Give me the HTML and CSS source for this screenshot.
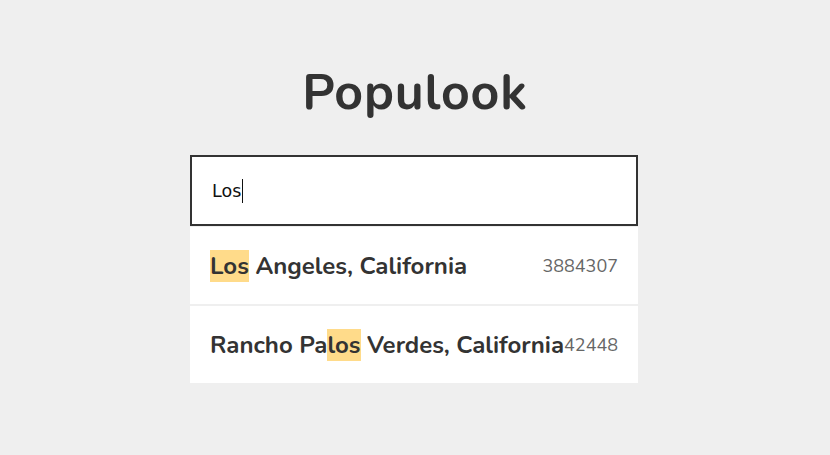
FILE: index.html
```html
<!DOCTYPE html>
<html lang="en">
<head>
<meta charset="utf-8">
<title>Populook</title>
<link rel="stylesheet" href="styles.css">
</head>
<body>
<main class="app">
  <h1 class="title">Populook</h1>
  <div class="search">
    <div class="search-input"><span class="search-text">Los</span><span class="caret"></span></div>
    <ul class="results">
      <li class="result">
        <span class="name"><mark>Los</mark> Angeles, California</span>
        <span class="pop">3884307</span>
      </li>
      <li class="result">
        <span class="name">Rancho Pa<mark>los</mark> Verdes, California</span>
        <span class="pop">42448</span>
      </li>
    </ul>
  </div>
</main>
</body>
</html>
```
FILE: styles.css
```css
html, body {
  margin: 0;
  padding: 0;
  background: #efefef;
}
body {
  font-family: "Nunito", "Lato", "Open Sans", sans-serif;
  color: #333;
}
.app {
  display: flex;
  flex-direction: column;
  align-items: center;
  padding-top: 58px;
}
.title {
  margin: 0;
  font-size: 50px;
  font-weight: 700;
  line-height: 70px;
  color: #333;
  letter-spacing: 0.8px;
}
.search {
  width: 448px;
  margin-top: 27px;
  margin-right: 2px;
}
.search-input {
  box-sizing: border-box;
  height: 71px;
  border: 2px solid #333;
  background: #fff;
  display: flex;
  align-items: center;
  padding-left: 20px;
  font-family: "DejaVu Sans", Verdana, sans-serif;
  font-size: 17.5px;
  color: #111;
}
.caret {
  display: inline-block;
  width: 1px;
  height: 24px;
  background: #111;
  margin-left: 1px;
}
.results {
  list-style: none;
  margin: 1px 0 0;
  padding: 0;
  display: flex;
  flex-direction: column;
  gap: 2px;
}
.result {
  background: #fff;
  height: 77px;
  display: flex;
  align-items: center;
  justify-content: space-between;
  padding: 0 20px;
  box-sizing: border-box;
}
.name {
  font-size: 24px;
  font-weight: 700;
  color: #333;
  white-space: nowrap;
}
mark {
  background: #ffdb8a;
  color: inherit;
  padding: 0;
}
.pop {
  font-size: 18px;
  color: #666;
}
```
